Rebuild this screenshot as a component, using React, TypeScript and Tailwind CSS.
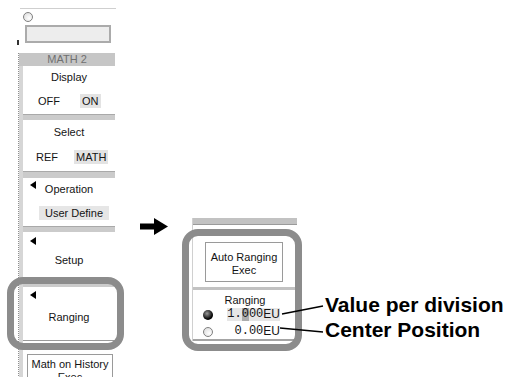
import React from "react";

const Tri = ({ top }: { top: string }) => (
  <div
    className={`absolute left-[7px] ${top} w-0 h-0 border-y-[4px] border-y-transparent border-r-[6px] border-r-black`}
  />
);

const Sep = ({ h }: { h: string }) => (
  <div className={`${h} bg-[#cbcbcb] border-t border-[#a9a9a9]`} />
);

export default function App() {
  return (
    <div className="relative w-[506px] h-[377px] bg-white overflow-hidden flex items-start font-['Liberation_Sans',Arial,sans-serif] text-[11px] leading-[14px] text-[#141414]">
      {/* LEFT PANEL */}
      <div className="relative w-[125px] h-[377px] shrink-0">
        <div className="relative h-[53px] pt-[8px] pl-[20px]">
          <div className="w-[96px] border-t border-[#cfcfcf]" />
          <div className="ml-[3px] mt-[3px] w-[10px] h-[10px] rounded-full border border-[#808080] bg-[radial-gradient(circle_at_65%_65%,#ffffff,#d8d8d8)]" />
          <div className="ml-[5px] mt-[3px] w-[86px] h-[18px] border-2 border-[#ababab] bg-[#ededed]" />
          <div className="absolute left-[17px] top-[40px] w-[2px] h-[5px] bg-[#333]" />
        </div>

        <div className="ml-[18px] w-[97px] border-l border-dotted border-[#8e8e8e] flex flex-col">
          <div className="h-[13px] bg-[#c6c6c6] flex items-center justify-center text-[#707070] leading-none">
            MATH 2
          </div>
          <div className="flex">
            <div className="w-[4px] bg-[#d6d6d6] shrink-0" />
            <div className="flex-1 flex flex-col">
              {/* Display */}
              <div className="h-[48px] bg-white flex flex-col pt-[4px]">
                <div className="text-center">Display</div>
                <div className="flex mt-[10px]">
                  <span className="ml-[15px]">OFF</span>
                  <span className="ml-[20px] px-[2px] bg-[#e3e3e3]">ON</span>
                </div>
              </div>
              <Sep h="h-[6px]" />
              {/* Select */}
              <div className="h-[51px] bg-white flex flex-col pt-[5px]">
                <div className="text-center">Select</div>
                <div className="flex mt-[11px]">
                  <span className="ml-[13px]">REF</span>
                  <span className="ml-[16px] px-[2px] bg-[#e3e3e3]">MATH</span>
                </div>
              </div>
              <Sep h="h-[7px]" />
              {/* Operation */}
              <div className="relative h-[48px] bg-white flex flex-col pt-[4px]">
                <Tri top="top-[3px]" />
                <div className="text-center">Operation</div>
                <div className="mt-[10px] ml-[16px] w-[70px] bg-[#e6e6e6] text-center">User Define</div>
              </div>
              <Sep h="h-[6px]" />
              {/* Setup */}
              <div className="relative h-[49px] bg-white flex flex-col pt-[21px]">
                <Tri top="top-[5px]" />
                <div className="text-center">Setup</div>
              </div>
              <Sep h="h-[6px]" />
              {/* Ranging */}
              <div className="relative h-[54px] bg-white flex flex-col pt-[23px] border-b border-[#9a9a9a]">
                <Tri top="top-[4px]" />
                <div className="text-center">Ranging</div>
              </div>
              <div className="h-[13px] bg-white" />
              <div className="ml-[4px] w-[86px] h-[40px] border border-[#9a9a9a] bg-white text-center pt-[3px] leading-[13px] whitespace-nowrap">
                <div>Math on History</div>
                <div>Exec</div>
              </div>
            </div>
          </div>
        </div>

        {/* highlight frame */}
        <div className="absolute left-[7px] top-[277px] w-[117px] h-[73px] border-[7px] border-[#8c8c8c] rounded-[16px]" />
      </div>

      {/* ARROW */}
      <svg className="ml-[15px] mt-[218px] shrink-0" width="28" height="17" viewBox="0 0 28 17">
        <rect x="0" y="5.5" width="15" height="6" fill="#000" />
        <polygon points="14,0 28,8.5 14,17" fill="#000" />
      </svg>

      {/* RIGHT PANEL */}
      <div className="relative ml-[14px] mt-[218px] w-[120px] shrink-0">
        <div className="ml-[10px] w-[105px] flex flex-col border-l border-[#d0d0d0]">
          <div className="h-[7px] bg-[#c2c2c2] border-b border-[#9a9a9a]" />
          <div className="h-[62px] bg-white pt-[17px] pl-[12px]">
            <div className="w-[78px] h-[40px] border border-[#9a9a9a] bg-white flex flex-col items-center pt-[8px] leading-[13px]">
              <div>Auto Ranging</div>
              <div>Exec</div>
            </div>
          </div>
          <div className="h-[3px] bg-[#c2c2c2]" />
          <div className="h-[51px] bg-white flex flex-col border-b-2 border-[#a4a4a4]">
            <div className="mt-[4px] h-[12px] leading-[12px] text-center">Ranging</div>
            <div className="mt-[2px] h-[13px] flex items-center">
              <div className="ml-[10px] w-[10px] h-[10px] rounded-full bg-[radial-gradient(circle_at_40%_35%,#9a9a9a,#000000_65%)]" />
              <div className="ml-auto mr-[17px] flex items-center bg-[#e6e6e6] text-[12px] leading-[13px]">
                <span className="font-['Liberation_Mono',monospace]">1.</span>
                <span className="font-['Liberation_Mono',monospace] bg-[#acacac]">0</span>
                <span className="font-['Liberation_Mono',monospace]">00</span>
                <span>EU</span>
              </div>
            </div>
            <div className="mt-[4px] h-[13px] flex items-center">
              <div className="ml-[10px] w-[10px] h-[10px] rounded-full border border-[#808080] bg-[radial-gradient(circle_at_65%_65%,#ffffff,#d8d8d8)]" />
              <div className="ml-auto mr-[17px] flex items-center text-[12px] leading-[13px]">
                <span className="font-['Liberation_Mono',monospace]">0.00</span>
                <span>EU</span>
              </div>
            </div>
          </div>
        </div>
        <div className="absolute left-0 top-[11px] w-[120px] h-[122px] border-[7px] border-[#8c8c8c] rounded-[16px]" />
      </div>

      {/* LABELS */}
      <div className="ml-[23px] mt-[292px] shrink-0 text-[21px] leading-[25px] font-bold text-black whitespace-nowrap">
        <div>Value per division</div>
        <div>Center Position</div>
      </div>

      {/* leader lines */}
      <svg className="absolute left-0 top-0 pointer-events-none" width="506" height="377">
        <line x1="282" y1="314" x2="323" y2="306" stroke="#000" strokeWidth="1.5" />
        <line x1="280" y1="328" x2="323" y2="332" stroke="#000" strokeWidth="1.5" />
      </svg>
    </div>
  );
}
